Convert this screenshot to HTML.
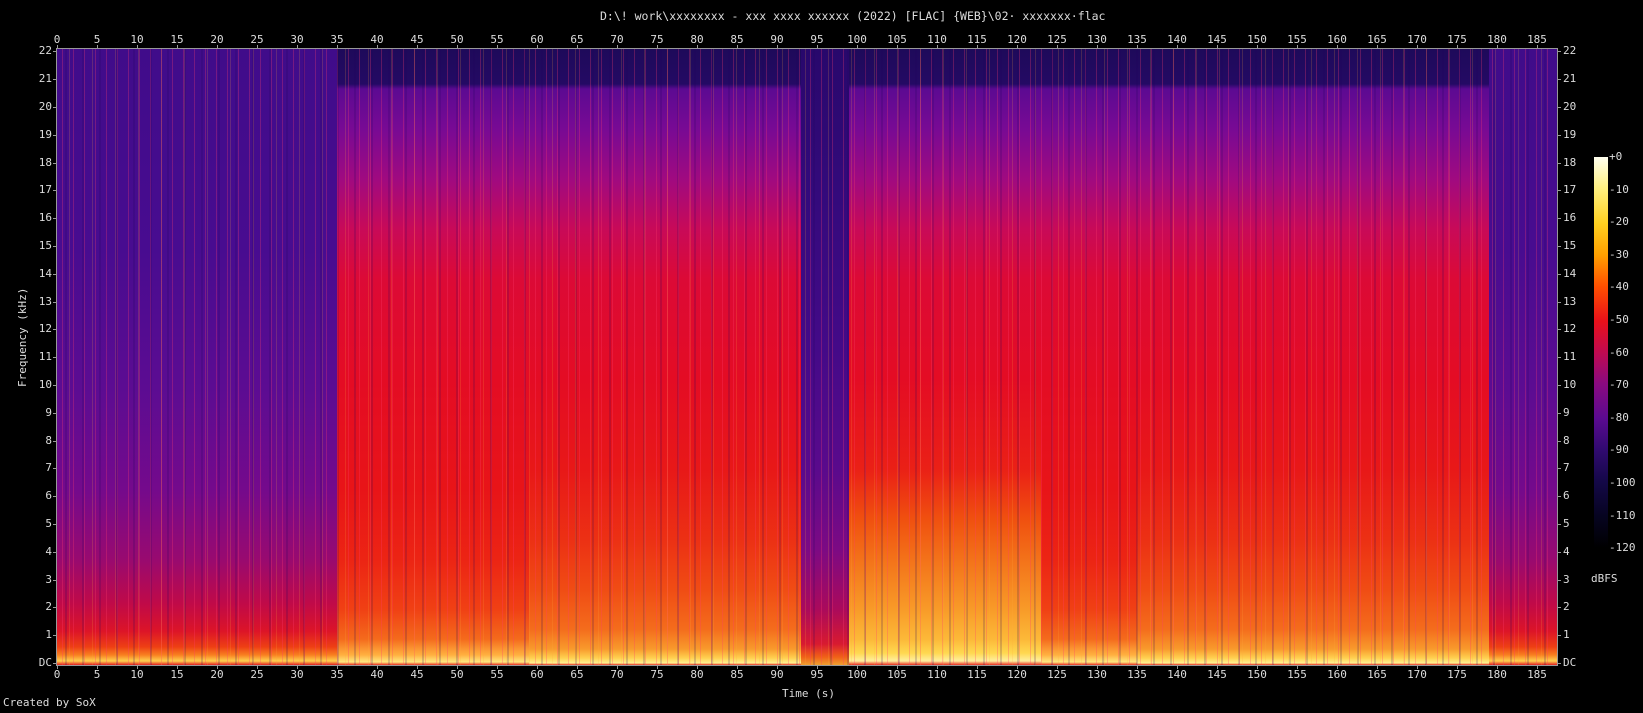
<!DOCTYPE html>
<html><head><meta charset="utf-8">
<style>
html,body{margin:0;padding:0;background:#000;width:1643px;height:713px;overflow:hidden}
body{position:relative;font-family:"DejaVu Sans Mono","Liberation Mono",monospace;color:#ddd;font-size:11px}
.t{position:absolute;white-space:nowrap;line-height:12px}
#plot{position:absolute;left:57px;top:49px;width:1500px;height:616px;overflow:hidden;background:#400a80}
.sec{position:absolute;top:0;height:616px}
.q{background:linear-gradient(to bottom,#400c8a 0px,#480c90 200px,#5c0c92 340px,#740a8c 440px,#980a70 510px,#c00a48 555px,#dc1428 582px,#ee4014 598px,#f88020 606px,#ffd050 612px,#e02020 616px)}
.l{background:linear-gradient(to bottom,#1e0a5a 0px,#240a64 35px,#5c0a92 40px,#780a94 80px,#a00a80 130px,#c80a58 180px,#dc0a36 230px,#e40c24 330px,#e81418 440px,#ec2414 510px,#f04014 560px,#f46a1c 590px,#ffb040 606px,#ffe880 613px,#e83020 616px)}
.lm{background:linear-gradient(to bottom,#1e0a5a 0px,#240a64 35px,#5c0a92 40px,#780a94 80px,#a00a80 130px,#c80a58 180px,#dc0a36 230px,#e40c24 330px,#e81818 420px,#ec3014 490px,#f04c14 540px,#f46c1c 580px,#f89a2c 600px,#ffd050 609px,#fff090 614px,#e83020 616px)}
.lb{background:linear-gradient(to bottom,#1e0a5a 0px,#240a64 35px,#5c0a92 40px,#780a94 80px,#a00a80 130px,#c80a58 180px,#dc0a36 230px,#e40c24 330px,#ea2016 420px,#f0500f 470px,#f47a1c 520px,#f89a28 560px,#fcb838 590px,#ffd850 604px,#fff0a0 612px,#e83020 616px)}
.d{background:linear-gradient(to bottom,#28086c 0px,#340a7c 150px,#440a88 300px,#5a0a8c 420px,#7c0a84 500px,#aa0a5c 560px,#d81a30 595px,#f06018 608px,#f0a030 616px)}
#tex1,#tex2,#tex3{position:absolute;left:0;top:0;width:1500px;height:616px}
#tex1{background:repeating-linear-gradient(to right,rgba(255,40,100,0) 0,rgba(255,40,100,0) 5px,rgba(255,60,110,.28) 5px,rgba(255,60,110,.28) 6px,rgba(255,40,100,0) 6px,rgba(255,40,100,0) 11px)}
#tex2{background:repeating-linear-gradient(to right,rgba(30,0,90,0) 0,rgba(30,0,90,0) 8px,rgba(30,0,90,.18) 8px,rgba(30,0,90,.18) 10px,rgba(30,0,90,0) 10px,rgba(30,0,90,0) 17px)}
#tex3{background:repeating-linear-gradient(to right,rgba(255,200,80,0) 0,rgba(255,200,80,0) 12px,rgba(255,170,60,.18) 12px,rgba(255,170,60,.18) 13px,rgba(255,200,80,0) 13px,rgba(255,200,80,0) 23px)}
#frame{position:absolute;left:56px;top:48px;width:1500px;height:616px;border:1px solid #999}
.tk{position:absolute;background:#999}
#cbar{position:absolute;left:1594px;top:157px;width:14px;height:391px;background:linear-gradient(to bottom,#fffff0 0%,#fff080 8%,#ffd020 17%,#ffa000 25%,#ff5000 33%,#e8101a 42%,#c00a50 50%,#8a0a80 58%,#5a0a90 67%,#300a70 75%,#140848 83%,#060420 92%,#000 100%)}
</style></head><body>
<div class="t" style="left:600px;top:10px;font-size:11.5px">D:\! work\xxxxxxxx - xxx xxxx xxxxxx (2022) [FLAC] {WEB}\02· xxxxxxx·flac</div>
<div id="plot">
<div class="sec q" style="left:0;width:280px"></div>
<div class="sec l" style="left:280px;width:192px"></div>
<div class="sec lm" style="left:472px;width:272px"></div>
<div class="sec d" style="left:744px;width:48px"></div>
<div class="sec lb" style="left:792px;width:192px"></div>
<div class="sec l" style="left:984px;width:96px"></div>
<div class="sec lm" style="left:1080px;width:352px"></div>
<div class="sec q" style="left:1432px;width:68px"></div>
<div id="tex1"></div><div id="tex2"></div><div id="tex3"></div>
</div>
<div id="frame"></div>
<div id="cbar"></div>
<div class="t" style="left:3px;top:697px">Created by SoX</div>
<div class="t" style="left:782px;top:688px">Time (s)</div>
<div class="t" style="left:-22px;top:336px;transform:rotate(-90deg);width:90px;text-align:center">Frequency (kHz)</div>
<div class="t" style="left:1591px;top:573px">dBFS</div>
<div id="ax"></div>
<script>
var h='';
for(var s=0;s<=185;s+=5){var x=57+s*8;
h+='<div class="tk" style="left:'+x+'px;top:45px;width:1px;height:4px"></div>';
h+='<div class="tk" style="left:'+x+'px;top:665px;width:1px;height:4px"></div>';
h+='<div class="t" style="left:'+(x-20)+'px;width:40px;text-align:center;top:34px">'+s+'</div>';
h+='<div class="t" style="left:'+(x-20)+'px;width:40px;text-align:center;top:669px">'+s+'</div>';}
for(var k=0;k<=22;k++){var y=Math.round(663-k*27.8);var lab=k==0?'DC':k;
h+='<div class="tk" style="left:53px;top:'+y+'px;width:4px;height:1px"></div>';
h+='<div class="tk" style="left:1557px;top:'+y+'px;width:4px;height:1px"></div>';
h+='<div class="t" style="left:20px;width:32px;text-align:right;top:'+(y-6)+'px">'+lab+'</div>';
h+='<div class="t" style="left:1563px;top:'+(y-6)+'px">'+lab+'</div>';}
for(var d=0;d<=12;d++){var y2=Math.round(157+d*32.6);
h+='<div class="t" style="left:1609px;top:'+(y2-6)+'px">'+(d==0?'+0':'-'+(d*10))+'</div>';}
document.getElementById('ax').innerHTML=h;
</script>
</body></html>
